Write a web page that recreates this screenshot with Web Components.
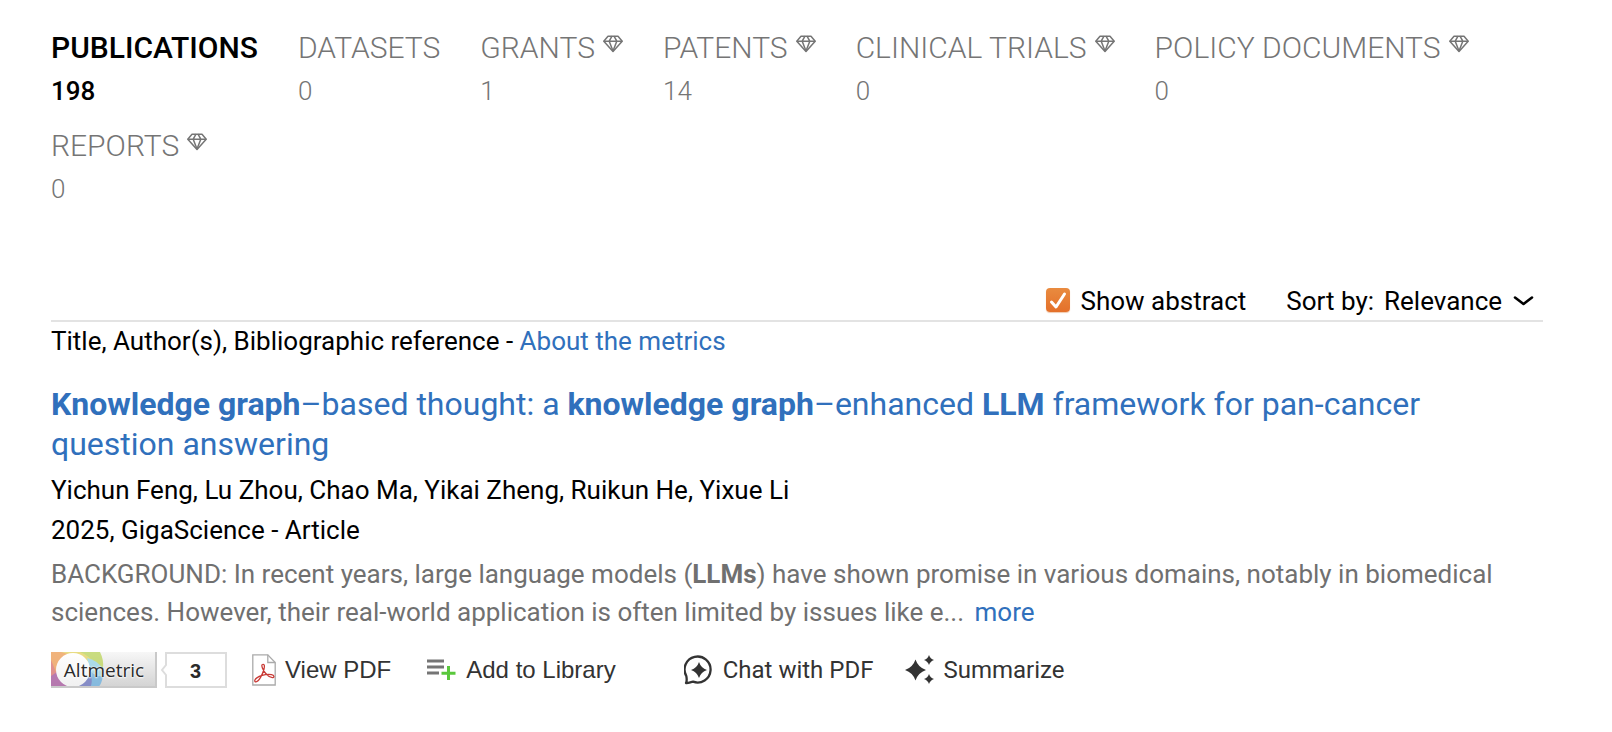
<!DOCTYPE html>
<html lang="en">
<head>
<meta charset="utf-8">
<meta name="viewport" content="width=device-width, initial-scale=1">
<title>Publications</title>
<style>
  body {
    margin: 0;
    background: #fff;
    color: #000;
    font-family: Roboto, "Liberation Sans", sans-serif;
    font-size: 26px;
  }
</style>
</head>
<body>
<search-page></search-page>

<script>
class GemIcon extends HTMLElement {
  constructor() {
    super();
    this.attachShadow({mode: 'open'});
    this.shadowRoot.innerHTML = `
      <style>
        :host { display: inline-block; vertical-align: top; margin: 7px 0 0 8px; }
        svg { display: block; width: 20px; height: 18px; }
      </style>
      <svg viewBox="0 0 20 18" fill="none" stroke="currentColor" stroke-width="1.5" stroke-linejoin="round" aria-hidden="true">
        <path d="M5 1.2h10l4.2 5L10 16.4.8 6.2z"/>
        <path d="M.8 6.2h18.4M6.2 6.2 10 16M13.8 6.2 10 16M9 1.2 6.2 6.2M11 1.2l2.8 5"/>
      </svg>`;
  }
}
customElements.define('gem-icon', GemIcon);

class SourceTab extends HTMLElement {
  constructor() {
    super();
    this.attachShadow({mode: 'open'});
  }
  connectedCallback() {
    const gem = this.hasAttribute('premium') ? '<gem-icon></gem-icon>' : '';
    this.shadowRoot.innerHTML = `
      <style>
        :host { display: block; font-weight: 300; color: #757575; }
        :host([active]) { font-weight: 500; color: #000; }
        a { display: block; color: inherit; text-decoration: none; white-space: nowrap; }
        .name { display: block; font-size: 30px; line-height: 40px; text-transform: uppercase; }
        .count { display: block; font-size: 26px; line-height: 46px; }
      </style>
      <a href="#">
        <span class="name"><slot></slot>${gem}</span>
        <span class="count">${this.getAttribute('count')}</span>
      </a>`;
  }
}
customElements.define('source-tab', SourceTab);

class SourceTabs extends HTMLElement {
  constructor() {
    super();
    this.attachShadow({mode: 'open'});
    this.shadowRoot.innerHTML = `
      <style>
        :host { display: block; }
        nav { display: flex; flex-wrap: wrap; gap: 12px 40px; }
      </style>
      <nav><slot></slot></nav>`;
  }
}
customElements.define('source-tabs', SourceTabs);

class ListToolbar extends HTMLElement {
  constructor() {
    super();
    this.attachShadow({mode: 'open'});
    this.shadowRoot.innerHTML = `
      <style>
        :host {
          display: flex;
          justify-content: flex-end;
          align-items: center;
          gap: 40px;
          padding: 0 8px 0 0;
          border-bottom: 2px solid #e3e3e3;
          line-height: 38px;
        }
        .check, .sort { display: flex; align-items: center; gap: 10px; }
        .box { display: grid; padding-bottom: 2px; }
        .box > * { grid-area: 1 / 1; }
        input {
          appearance: none;
          width: 24px;
          height: 24px;
          margin: 0;
          border-radius: 4px;
          background: linear-gradient(#e98b3f, #e4702a);
          box-shadow: 0 1px 1px #f0c9ad;
        }
        input:not(:checked) { background: #ddd; }
        svg { display: block; pointer-events: none; }
        select {
          appearance: none;
          border: 0;
          padding: 0;
          margin: 0;
          background: none;
          color: inherit;
          font: inherit;
          line-height: 38px;
        }
      </style>
      <div class="check">
        <span class="box">
          <input type="checkbox" id="abstract" checked>
          <svg width="24" height="24" viewBox="0 0 24 24" fill="none" stroke="#fff" stroke-width="3" stroke-linecap="round" stroke-linejoin="round" aria-hidden="true"><path d="M5.500 14l4.500 5L18.500 6"/></svg>
        </span>
        <label for="abstract">Show abstract</label>
      </div>
      <div class="sort">
        <label for="sort">Sort by:</label>
        <select id="sort"><option>Relevance</option></select>
        <svg width="22" height="12" viewBox="0 0 22 12" fill="none" stroke="#000" stroke-width="2.600" stroke-linecap="round" stroke-linejoin="round" aria-hidden="true"><path d="M2 2.500 10.500 9 19 2.500"/></svg>
      </div>`;
  }
}
customElements.define('list-toolbar', ListToolbar);

class AltmetricBadge extends HTMLElement {
  constructor() {
    super();
    this.attachShadow({mode: 'open'});
  }
  connectedCallback() {
    this.shadowRoot.innerHTML = `
      <style>
        :host { display: block; }
        a { display: flex; color: #2a2a2a; text-decoration: none; }
        .label, .score { display: grid; height: 36px; box-sizing: border-box; }
        .label > *, .score > * { grid-area: 1 / 1; }
        .label { width: 106px; }
        .score { width: 66px; }
        .name {
          align-self: center;
          justify-self: center;
          font: 500 19px/34px "Open Sans", sans-serif;
          text-shadow: 0 1px 2px #fff, 0 0 2px #fff;
        }
        .value {
          align-self: center;
          padding-left: 33px;
          font: bold 20px/38px "Liberation Sans", sans-serif;
        }
        svg { display: block; }
      </style>
      <a href="#">
        <span class="label">
          <svg width="106" height="36" viewBox="0 0 106 36" aria-hidden="true">
            <defs>
              <linearGradient id="g" x2="0" y2="1"><stop stop-color="#f7f7f7"/><stop offset="1" stop-color="#d2d2d2"/></linearGradient>
              <linearGradient id="w" x2="0" y2="1"><stop stop-color="#fff"/><stop offset="1" stop-color="#f0f0f0"/></linearGradient>
            </defs>
            <path d="M0 0h106v36H0z" fill="url(#g)"/>
            <g opacity=".85">
              <path d="M0 0h23v36H0z" fill="#e0827f"/>
              <path d="M0 0h20L8 12 5 20 0 8z" fill="#f0a868"/>
              <path d="M0 24l6-4 6 10 16 6H0z" fill="#b068a8"/>
              <path d="M10 0h24q6 3 8 12L24 4z" fill="#e6d870"/>
              <path d="M29 0h20q4 8 3 16l-8-2Q40 4 29 0z" fill="#c2d86c"/>
              <path d="M36 6q10 2 16 11v9L40 20z" fill="#a0d8e8"/>
              <path d="M39 18q5 7 13 6-1 7-5 12H32z" fill="#78b6e0"/>
              <path d="M40 24q2 6-1 12H24z" fill="#7880c4"/>
            </g>
            <circle cx="22" cy="18" r="17" fill="url(#w)"/>
            <path d="M0 35h106M105 0v36" stroke="#c9c9c9" stroke-width="2"/>
          </svg>
          <span class="name">Altmetric</span>
        </span>
        <span class="score">
          <svg width="70" height="36" viewBox="0 0 70 36" aria-hidden="true"><path d="M9 1h60v34H9V23l-4-5 4-5z" fill="#fff" stroke="#ddd" stroke-width="2"/></svg>
          <span class="value">${this.getAttribute('score')}</span>
        </span>
      </a>`;
  }
}
customElements.define('altmetric-badge', AltmetricBadge);

const star = (x, y, r) => {
  const k = r / 4;
  return `<path d="M${x} ${y - r}Q${x + k} ${y - k} ${x + r} ${y}Q${x + k} ${y + k} ${x} ${y + r}Q${x - k} ${y + k} ${x - r} ${y}Q${x - k} ${y - k} ${x} ${y - r}z" fill="#333"/>`;
};

const icons = {
  pdf: `<svg width="24" height="32" viewBox="0 0 24 32" fill="none">
    <path d="M.8.800h15L23.200 8.500v22.500H.8z" fill="#fff" stroke="#aaa" stroke-width="1.300"/>
    <path d="M15.800.8v7.700h7.400" stroke="#aaa" stroke-width="1.300"/>
    <path d="M10.500 10.500c2-.8 2.300 1.500 1.400 5-1.400 5-4.900 12-7.900 12.300-2 .1-1.500-2.300.5-3.700 3.500-2.400 10-4 15-3.500 3 .4 3.100 3 .8 3-3.500 0-8.300-5.100-9.900-9.600-.7-2-.8-3.200.1-3.500z" stroke="#c93a36" stroke-width="1.300"/></svg>`,
  library: `<svg width="30" height="22" viewBox="0 0 30 22" fill="none">
    <path d="M0 2h17M0 8h17M0 14h12" stroke="#757575" stroke-width="3"/>
    <path d="M21.500 7v14M14.500 14.200h14" stroke="#5ac83c" stroke-width="3"/></svg>`,
  chat: `<svg width="30" height="30" viewBox="0 0 30 30" fill="none">
    <path d="M2 28c1-2 .7-5 .3-7A13 13 0 1 1 9 26.700c-2 .1-4.500 1.600-7 1.300z" stroke="#333" stroke-width="2.300" stroke-linejoin="round"/>${star(15, 15, 8)}</svg>`,
  summarize: `<svg width="29" height="30" viewBox="0 0 29 30">${star(10.5, 15, 10.5)}${star(24, 5, 5)}${star(24, 24, 5)}</svg>`
};

class ActionLink extends HTMLElement {
  constructor() {
    super();
    this.attachShadow({mode: 'open'});
  }
  connectedCallback() {
    this.shadowRoot.innerHTML = `
      <style>
        :host { display: block; }
        a, button {
          display: flex;
          align-items: center;
          gap: 9px;
          padding: 0;
          border: 0;
          background: none;
          color: #333;
          font: inherit;
          font-size: 24px;
          line-height: 36px;
          text-decoration: none;
          white-space: nowrap;
          cursor: pointer;
        }
        svg { display: block; }
      </style>
      ${this.hasAttribute('href')
        ? `<a href="${this.getAttribute('href')}">${icons[this.getAttribute('icon')]}<slot></slot></a>`
        : `<button type="button">${icons[this.getAttribute('icon')]}<slot></slot></button>`}`;
  }
}
customElements.define('action-link', ActionLink);

class PublicationItem extends HTMLElement {
  constructor() {
    super();
    this.attachShadow({mode: 'open'});
    this.shadowRoot.innerHTML = `
      <style>
        :host { display: block; }
        h3 { margin: 0; font-size: 32px; font-weight: 400; line-height: 40px; }
        .meta { line-height: 40px; margin-top: 6px; }
        .abstract { margin: 5px 0 0; line-height: 38px; color: #707070; }
        .actions { display: flex; flex-wrap: wrap; align-items: center; margin-top: 21px; }
      </style>
      <article>
        <h3><slot name="title"></slot></h3>
        <div class="meta">
          <slot name="authors"></slot>
          <slot name="source"></slot>
        </div>
        <p class="abstract"><slot name="abstract"></slot></p>
        <div class="actions"><slot></slot></div>
      </article>`;
  }
}
customElements.define('publication-item', PublicationItem);

class SearchPage extends HTMLElement {
  constructor() {
    super();
    this.attachShadow({mode: 'open'});
    this.shadowRoot.innerHTML = `
      <style>
        :host { display: block; padding: 28px 69px 43px 51px; }
        a { color: #3070bc; text-decoration: none; }
        b { font-weight: 700; }
        list-toolbar { margin-top: 70px; }
        .legend { margin: 0; line-height: 38px; }
        publication-item { margin-top: 24px; }
        [slot="authors"], [slot="source"] { display: block; }
        .more { margin-left: 4px; }
        .pdf, .library { font-family: "Liberation Sans", Arial, sans-serif; }
        .pdf { margin-left: 29px; }
        .library { margin-left: 36px; }
        .chat { margin-left: 68px; }
        .summarize { margin-left: 32px; }
      </style>
      <source-tabs>
        <source-tab active count="198">Publications</source-tab>
        <source-tab count="0">Datasets</source-tab>
        <source-tab premium count="1">Grants</source-tab>
        <source-tab premium count="14">Patents</source-tab>
        <source-tab premium count="0">Clinical Trials</source-tab>
        <source-tab premium count="0">Policy Documents</source-tab>
        <source-tab premium count="0">Reports</source-tab>
      </source-tabs>
      <list-toolbar></list-toolbar>
      <p class="legend">Title, Author(s), Bibliographic reference - <a href="#">About the metrics</a></p>
      <publication-item>
        <a slot="title" href="#"><b>Knowledge graph</b>–based thought: a <b>knowledge graph</b>–enhanced <b>LLM</b> framework for pan-cancer question answering</a>
        <span slot="authors">Yichun Feng, Lu Zhou, Chao Ma, Yikai Zheng, Ruikun He, Yixue Li</span>
        <span slot="source">2025, GigaScience - Article</span>
        <span slot="abstract">BACKGROUND: In recent years, large language models (<b>LLMs</b>) have shown promise in various domains, notably in biomedical sciences. However, their real-world application is often limited by issues like e... <a class="more" href="#">more</a></span>
        <altmetric-badge score="3"></altmetric-badge>
        <action-link class="pdf" icon="pdf" href="#">View PDF</action-link>
        <action-link class="library" icon="library">Add to Library</action-link>
        <action-link class="chat" icon="chat">Chat with PDF</action-link>
        <action-link class="summarize" icon="summarize">Summarize</action-link>
      </publication-item>`;
  }
}
customElements.define('search-page', SearchPage);
</script>
</body>
</html>
